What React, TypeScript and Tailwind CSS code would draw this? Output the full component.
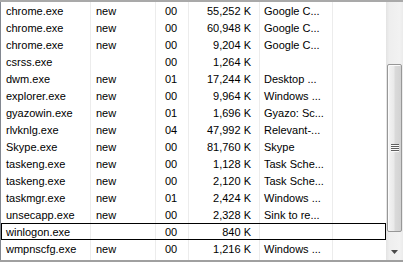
import React from 'react';

type Proc = {
  name: string;
  session: string;
  cpu: string;
  mem: string;
  desc: string;
  focused?: boolean;
};

const procs: Proc[] = [
  { name: 'chrome.exe', session: 'new', cpu: '00', mem: '55,252 K', desc: 'Google C...' },
  { name: 'chrome.exe', session: 'new', cpu: '00', mem: '60,948 K', desc: 'Google C...' },
  { name: 'chrome.exe', session: 'new', cpu: '00', mem: '9,204 K', desc: 'Google C...' },
  { name: 'csrss.exe', session: '', cpu: '00', mem: '1,264 K', desc: '' },
  { name: 'dwm.exe', session: 'new', cpu: '01', mem: '17,244 K', desc: 'Desktop ...' },
  { name: 'explorer.exe', session: 'new', cpu: '00', mem: '9,964 K', desc: 'Windows ...' },
  { name: 'gyazowin.exe', session: 'new', cpu: '01', mem: '1,696 K', desc: 'Gyazo: Sc...' },
  { name: 'rlvknlg.exe', session: 'new', cpu: '04', mem: '47,992 K', desc: 'Relevant-...' },
  { name: 'Skype.exe', session: 'new', cpu: '00', mem: '81,760 K', desc: 'Skype' },
  { name: 'taskeng.exe', session: 'new', cpu: '00', mem: '1,128 K', desc: 'Task Sche...' },
  { name: 'taskeng.exe', session: 'new', cpu: '00', mem: '2,120 K', desc: 'Task Sche...' },
  { name: 'taskmgr.exe', session: 'new', cpu: '01', mem: '2,424 K', desc: 'Windows ...' },
  { name: 'unsecapp.exe', session: 'new', cpu: '00', mem: '2,328 K', desc: 'Sink to re...' },
  { name: 'winlogon.exe', session: '', cpu: '00', mem: '840 K', desc: '', focused: true },
  { name: 'wmpnscfg.exe', session: 'new', cpu: '00', mem: '1,216 K', desc: 'Windows ...' },
];

const cell = 'border-r border-[#ececec] whitespace-nowrap overflow-hidden leading-[18px]';

function Row({ p }: { p: Proc }) {
  return (
    <div
      className={`grid grid-cols-[90px_65px_33px_71px_73px_1fr] h-[17px] shrink-0 ${
        p.focused ? 'outline outline-1 outline-black -outline-offset-1' : ''
      }`}
    >
      <div className={`${cell} pl-[5px]`}>{p.name}</div>
      <div className={`${cell} pl-[5px]`}>{p.session}</div>
      <div className={`${cell} pl-[9px]`}>{p.cpu}</div>
      <div className={`${cell} pr-[8px] text-right`}>{p.mem}</div>
      <div className={`${cell} pl-[4px]`}>{p.desc}</div>
      <div className="overflow-hidden" />
    </div>
  );
}

function Scrollbar() {
  return (
    <div className="w-[17px] flex flex-col bg-[linear-gradient(to_right,#e3e3e3,#eeeeee_20%,#f2f2f2_80%,#ebebeb)]">
      <div className="flex-1 pt-[62px]">
        <div className="mx-px h-[168px] rounded-[2px] border border-[#979797] bg-[linear-gradient(to_right,#f4f4f4,#eaeaea_45%,#dadada_55%,#d2d2d2)] shadow-[inset_1px_1px_0_#fbfbfb] flex items-center justify-center">
          <svg width="8" height="8" viewBox="0 0 8 8">
            <rect x="0" y="0" width="8" height="1" fill="#5f5f5f" />
            <rect x="0" y="2" width="8" height="1" fill="#5f5f5f" />
            <rect x="0" y="4" width="8" height="1" fill="#5f5f5f" />
            <rect x="0" y="6" width="8" height="1" fill="#5f5f5f" />
            <rect x="0" y="1" width="8" height="1" fill="#fafafa" />
            <rect x="0" y="3" width="8" height="1" fill="#fafafa" />
            <rect x="0" y="5" width="8" height="1" fill="#fafafa" />
            <rect x="0" y="7" width="8" height="1" fill="#fafafa" />
          </svg>
        </div>
      </div>
      <div className="h-[17px] flex items-center justify-center">
        <svg width="7" height="4" viewBox="0 0 7 4">
          <polygon points="0,0 7,0 3.5,4" fill="#4a4a4a" />
        </svg>
      </div>
    </div>
  );
}

export default function App() {
  return (
    <div className="w-[403px] h-[262px] bg-white flex flex-col text-[11px] text-black font-['Liberation_Sans',Arial,sans-serif]">
      <div className="h-[2px] bg-[#a9a9a9] shrink-0" />
      <div className="flex-1 flex min-h-0">
        <div className="flex-1 border-l border-[#828790] flex flex-col overflow-hidden">
          {procs.map((p, i) => (
            <Row key={i} p={p} />
          ))}
          <Row p={{ name: '', session: '', cpu: '', mem: '', desc: '' }} />
        </div>
        <Scrollbar />
      </div>
      <div className="h-[2px] bg-[#a0a0a0] shrink-0" />
    </div>
  );
}
